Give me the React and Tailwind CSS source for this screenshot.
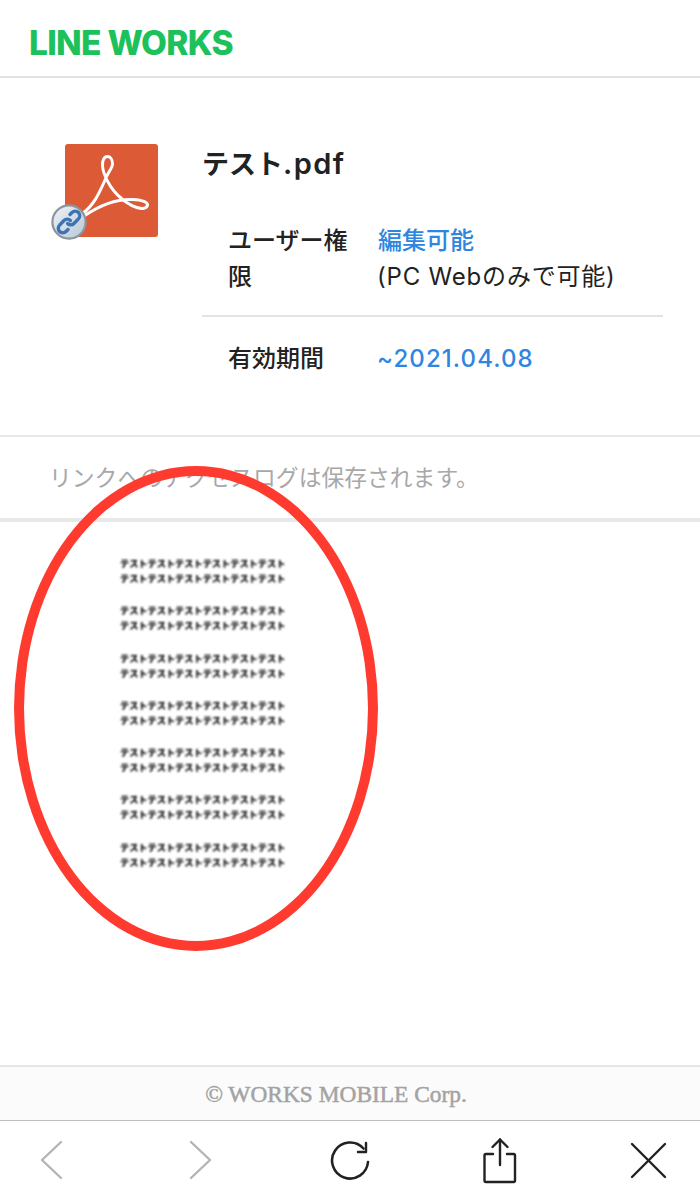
const sans = "font-['Inter','Noto_Sans_CJK_JP',sans-serif]";
const lines = "テストテストテストテストテストテストテストテストテストテストテストテスト".slice(0, 18);

function PdfIcon() {
  return (
    <div className="relative w-[93px] h-[93px] rounded-[3px] bg-[#dc5a35]">
      <svg viewBox="0 0 92 92" className="w-[92px] h-[92px]" fill="none" stroke="#fff" strokeWidth="3" strokeLinecap="round">
        <path d="M18 69 C28 62 34 50 40 36 C43 28 47.5 24 47.5 20 C47.5 15 45 12.5 42.5 12.5 C39.5 12.5 37 16 37.5 22 C38.5 32 46 46 56 54 C62 60 72 65 78 64.5 C81 64 82.5 63 82.5 61 C82.5 57.5 76 56 68 55.5 C56 55 38 59 19 72" />
      </svg>
      <svg viewBox="0 0 36 36" className="absolute left-[-14px] top-[60px] w-[36px] h-[36px]">
        <defs>
          <linearGradient id="badge" x1="0" y1="0" x2="1" y2="1">
            <stop offset="0" stopColor="#eef3f8" />
            <stop offset="1" stopColor="#b9c7d4" />
          </linearGradient>
        </defs>
        <circle cx="18" cy="18" r="16.6" fill="url(#badge)" stroke="#8b959e" strokeWidth="2.2" />
        <g fill="none" stroke="#3d73b2" strokeWidth="3.4" strokeLinecap="round">
          <path d="M19 10.5 L21 8.5 a4.5 4.5 0 0 1 6.4 6.4 L23 19.5 a4.5 4.5 0 0 1 -6.4 0" />
          <path d="M17 25.5 L15 27.5 a4.5 4.5 0 0 1 -6.4 -6.4 L13 16.5 a4.5 4.5 0 0 1 6.4 0" />
        </g>
      </svg>
    </div>
  );
}

function Preview() {
  return (
    <div className="pl-[120px] pt-[34px] flex flex-col gap-[17.3px] font-['Noto_Sans_CJK_JP',sans-serif] font-black text-[9.2px] leading-[15px] text-[#000] blur-[1px]">
      {[0, 1, 2, 3, 4, 5, 6].map((i) => (
        <div key={i} className="whitespace-nowrap">
          <div>{lines}</div>
          <div>{lines}</div>
        </div>
      ))}
    </div>
  );
}

function Toolbar() {
  const cls = "w-10 h-[46px]";
  const common = { fill: "none", strokeLinecap: "round", strokeLinejoin: "round", viewBox: "0 0 40 46" };
  return (
    <div className="h-[82px] bg-white border-t border-[#bdbdbd] flex justify-between items-start px-[31px] pt-[17px]">
      <svg className={cls} {...common} stroke="#b4b4b4" strokeWidth="2.4"><path d="M30 4 L11 22 L30 40" /></svg>
      <svg className={cls} {...common} stroke="#b4b4b4" strokeWidth="2.4"><path d="M10 4 L29 22 L10 40" /></svg>
      <svg className={cls} {...common} stroke="#222" strokeWidth="2.6">
        <path d="M33.5 10.5 A18 18 0 1 0 38 24" />
        <path d="M28 14 L36 14 L36 5" strokeWidth="2.4" />
      </svg>
      <svg className={cls} {...common} stroke="#222" strokeWidth="2.4">
        <path d="M13 16 H6 Q4.5 16 4.5 17.5 V42.5 Q4.5 44 6 44 H33.5 Q35 44 35 42.5 V17.5 Q35 16 33.5 16 H27" />
        <path d="M20 1.5 V27" />
        <path d="M12.5 9 L20 1.5 L27.5 9" />
      </svg>
      <svg className={cls} {...common} stroke="#222" strokeWidth="2.4"><path d="M3 6 L36 39 M36 6 L3 39" /></svg>
    </div>
  );
}

export default function App() {
  return (
    <div className={`relative w-[700px] h-[1202px] overflow-hidden bg-white flex flex-col ${sans}`}>
      <header className="h-[78px] shrink-0 border-b-2 border-[#e2e2e2] pl-[29px] flex items-center pt-[12px]">
        <span className="font-['Inter',sans-serif] font-extrabold text-[33.5px] leading-none tracking-[-0.7px] text-[#1cc15c]">LINE WORKS</span>
      </header>

      <section className="h-[359px] shrink-0 border-b-2 border-[#e8e8e8] flex pl-[65px] pr-[37px] pt-[66px]">
        <div className="w-[137px] shrink-0"><PdfIcon /></div>
        <div className="flex-1 min-w-0">
          <h1 className="text-[27px] leading-[40px] font-semibold text-[#222]">テスト<span className="text-[29px] tracking-[1.4px]">.pdf</span></h1>
          <div className="mt-[38px] border-b-2 border-[#e3e3e3] pb-[20px] pl-[26px] flex text-[24px] leading-[36px] text-[#222]">
            <div className="w-[150px] shrink-0 pr-[24px] font-medium">ユーザー権限</div>
            <div>
              <div className="text-[#2f86e0] font-medium">編集可能</div>
              <div className="tracking-[0.8px] -ml-px">(PC Webのみで可能)</div>
            </div>
          </div>
          <div className="pt-[24px] pl-[26px] flex text-[24px] leading-[36px]">
            <div className="w-[150px] shrink-0 font-medium text-[#222]">有効期間</div>
            <div className="text-[#2f86e0] tracking-[1.1px] font-medium -ml-px">~2021.04.08</div>
          </div>
        </div>
      </section>

      <div className="h-[85px] shrink-0 border-b-4 border-[#e8e8e8] pl-[49px] pt-[2px] flex items-center text-[22.8px] text-[#a8a8a8]">
        リンクへのアクセスログは保存されます。
      </div>

      <main className="flex-1 min-h-0"><Preview /></main>

      <footer className="h-[55px] shrink-0 bg-[#fbfbfb] border-t-2 border-[#e6e6e6] flex items-center justify-center pr-[28px] pt-[3px] font-['Liberation_Serif',serif] text-[23.4px] text-[#a3a3a3] [-webkit-text-stroke:0.5px_#a3a3a3]">
        © WORKS MOBILE Corp.
      </footer>
      <Toolbar />

      <div className="absolute left-[14px] top-[466px] w-[364px] h-[485px] rounded-[50%] border-[10px] border-[#ff3b30]" />
    </div>
  );
}
